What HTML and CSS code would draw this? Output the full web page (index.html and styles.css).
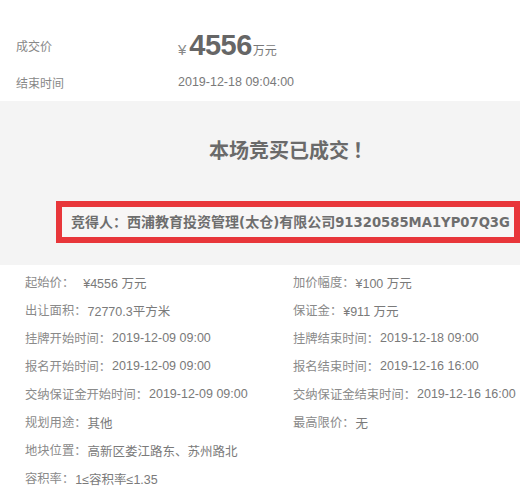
FILE: index.html
```html
<!DOCTYPE html>
<html lang="zh-CN">
<head>
<meta charset="utf-8">
<link rel="stylesheet" href="styles.css">
</head>
<body>
<section class="deal">
  <div class="deal-row deal-row--price">
    <span class="deal-label">成交价</span>
    <span class="deal-value"><span class="yen">¥</span><b class="amount">4556</b><span class="unit">万元</span></span>
  </div>
  <div class="deal-row deal-row--time">
    <span class="deal-label">结束时间</span>
    <span class="deal-value">2019-12-18 09:04:00</span>
  </div>
</section>

<section class="result">
  <div class="result-inner">
    <h2 class="result-title">本场竞买已成交<span class="excl">！</span></h2>
    <div class="winner">
      <div class="winner-text">竞得人：西浦教育投资管理<span class="lat">(</span>太仓<span class="lat">)</span>有限公司<span class="lat">91320585MA1YP07Q3G</span></div>
    </div>
  </div>
</section>

<section class="info">
  <div class="info-item"><span class="k">起始价：</span><span class="v v--gap">¥4556 万元</span></div>
  <div class="info-item"><span class="k">加价幅度：</span><span class="v">¥100 万元</span></div>
  <div class="info-item"><span class="k">出让面积：</span><span class="v">72770.3平方米</span></div>
  <div class="info-item"><span class="k">保证金：</span><span class="v">¥911 万元</span></div>
  <div class="info-item"><span class="k">挂牌开始时间：</span><span class="v">2019-12-09 09:00</span></div>
  <div class="info-item"><span class="k">挂牌结束时间：</span><span class="v">2019-12-18 09:00</span></div>
  <div class="info-item"><span class="k">报名开始时间：</span><span class="v">2019-12-09 09:00</span></div>
  <div class="info-item"><span class="k">报名结束时间：</span><span class="v">2019-12-16 16:00</span></div>
  <div class="info-item"><span class="k">交纳保证金开始时间：</span><span class="v">2019-12-09 09:00</span></div>
  <div class="info-item"><span class="k">交纳保证金结束时间：</span><span class="v">2019-12-16 16:00</span></div>
  <div class="info-item"><span class="k">规划用途：</span><span class="v">其他</span></div>
  <div class="info-item"><span class="k">最高限价：</span><span class="v">无</span></div>
  <div class="info-item info-item--wide"><span class="k">地块位置：</span><span class="v">高新区娄江路东、苏州路北</span></div>
  <div class="info-item info-item--wide"><span class="k">容积率：</span><span class="v">1≤容积率≤1.35</span></div>
</section>
</body>
</html>
```

FILE: styles.css
```css
html, body {
  margin: 0;
  padding: 0;
  background: #fff;
}
body {
  font-family: "Liberation Sans", "Noto Sans CJK SC", sans-serif;
  font-size: 12px;
  color: #777;
  width: 520px;
  height: 491px;
  overflow: hidden;
}

/* top deal block */
.deal {
  padding: 25px 0 2px 16px;
}
.deal-row {
  display: flex;
  align-items: center;
}
.deal-row--price { height: 40px; }
.deal-row--time { height: 34px; }
.deal-label {
  width: 162px;
  color: #888;
  font-size: 12px;
}
.deal-value {
  color: #7a7a7a;
  font-size: 12.5px;
  display: flex;
  align-items: baseline;
}
.yen {
  font-size: 15px;
  color: #888;
  margin-right: 3px;
}
.amount {
  font-size: 29px;
  font-weight: bold;
  color: #666;
  line-height: 1;
  letter-spacing: -0.5px;
}
.unit {
  font-size: 12px;
  color: #777;
  margin-left: 1px;
}

/* grey result block */
.result {
  background: #f4f4f4;
  height: 164px;
}
.result-inner {
  padding: 35px 0 0 56px;
  display: flex;
  flex-direction: column;
  align-items: center;
}
.result-title {
  margin: 0 0 0 6px;
  font-family: "Noto Sans CJK SC", sans-serif;
  font-size: 20px;
  line-height: 28px;
  font-weight: bold;
  color: #6a6a6a;
}
.excl {
  margin-left: 4px;
}
.winner {
  margin-top: 37px;
  border: 6px solid #e8363a;
  background: #f7f6f6;
  padding: 2px 4px 2px 9px;
}
.winner-text {
  font-family: "Noto Sans CJK SC", sans-serif;
  font-size: 14px;
  line-height: 25px;
  font-weight: bold;
  color: #6e6e6e;
  white-space: nowrap;
}
.lat {
  font-family: "DejaVu Sans", sans-serif;
  font-weight: bold;
  font-size: 13.2px;
}

/* info grid */
.info {
  display: grid;
  grid-template-columns: 268px 1fr;
  padding: 3px 0 0 25px;
}
.info-item {
  display: flex;
  align-items: center;
  height: 28px;
  white-space: nowrap;
  font-size: 12px;
}
.info-item--wide {
  grid-column: 1 / -1;
}
.k {
  font-family: "Noto Sans CJK SC", sans-serif;
  font-size: 12.3px;
  color: #8a8a8a;
  margin-right: 1px;
}
.v {
  color: #7a7a7a;
  font-size: 12.5px;
}
.v--gap {
  margin-left: 8px;
}
```
